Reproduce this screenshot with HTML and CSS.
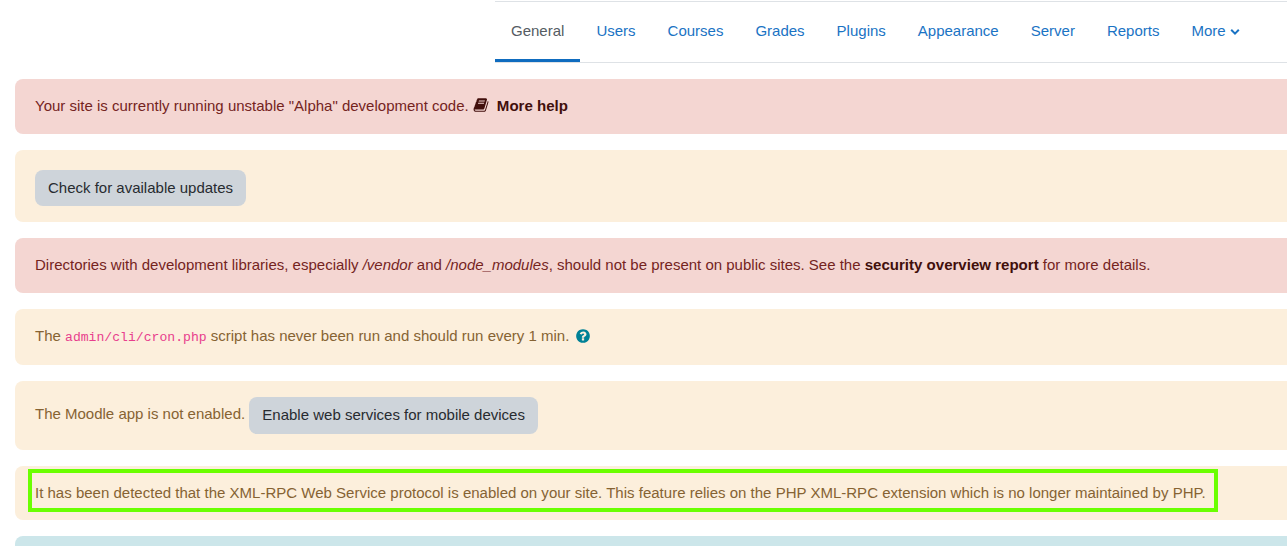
FILE: index.html
```html
<!DOCTYPE html>
<html lang="en">
<head>
<meta charset="utf-8">
<title>Site administration</title>
<link rel="stylesheet" href="styles.css">
</head>
<body>
<nav class="tabs">
  <a class="tab active" href="#">General</a>
  <a class="tab" href="#">Users</a>
  <a class="tab" href="#">Courses</a>
  <a class="tab" href="#">Grades</a>
  <a class="tab" href="#">Plugins</a>
  <a class="tab" href="#">Appearance</a>
  <a class="tab" href="#">Server</a>
  <a class="tab" href="#">Reports</a>
  <a class="tab" href="#">More <svg class="chev" viewBox="0 0 10 8" aria-hidden="true"><path d="M1.2 1.8 5 5.6l3.8-3.8" fill="none" stroke="currentColor" stroke-width="2"/></svg></a>
</nav>
<main class="alerts">
  <div class="alert danger">Your site is currently running unstable "Alpha" development code. <a class="alert-link" href="#"><svg class="ico book" viewBox="0 0 1792 1792" aria-hidden="true"><path fill="currentColor" d="M1703 478q40 57 18 129l-275 906q-19 64-76.5 107.5t-122.5 43.5h-923q-77 0-148.5-53.5t-99.5-131.5q-24-67-2-127 0-4 3-27t4-37q1-8-3-21.5t-3-19.5q2-11 8-21t16.5-23.5 16.5-23.5q23-38 45-91.5t30-91.5q3-10 .5-30t-.5-28q3-11 17-28t17-23q21-36 42-92t25-90q1-9-2.5-32t.5-28q4-13 22-30.5t22-22.5q19-26 42.5-84.5t27.5-96.5q1-8-3-25.5t-2-26.5q2-8 9-18t18-23 17-21q8-12 16.5-30.5t15-35 16-36 19.5-32 26.5-23.5 36-11.5 47.5 5.5l-1 3q38-9 51-9h761q74 0 114 56t18 130l-274 906q-36 119-71.5 153.5t-128.5 34.5h-869q-27 0-38 15-11 16-1 43 24 70 144 70h923q29 0 56-15.5t35-41.5l300-987q7-22 5-57 38 15 59 43zm-1064 2q-4 13 2 22.5t20 9.5h608q13 0 25.5-9.5t16.5-22.5l21-64q4-13-2-22.5t-20-9.5h-608q-13 0-25.5 9.5t-16.5 22.5zm-83 256q-4 13 2 22.5t20 9.5h608q13 0 25.5-9.5t16.5-22.5l21-64q4-13-2-22.5t-20-9.5h-608q-13 0-25.5 9.5t-16.5 22.5z"/></svg>More help</a></div>
  <div class="alert warning"><div class="btn-row"><a class="btn" href="#">Check for available updates</a></div></div>
  <div class="alert danger">Directories with development libraries, especially <em>/vendor</em> and <em>/node_modules</em>, should not be present on public sites. See the <a class="alert-link" href="#">security overview report</a> for more details.</div>
  <div class="alert warning">The <code>admin/cli/cron.php</code> script has never been run and should run every 1 min. <svg class="ico help" viewBox="0 0 1792 1792" aria-hidden="true"><path fill="currentColor" d="M1024 1376v-192q0-14-9-23t-23-9h-192q-14 0-23 9t-9 23v192q0 14 9 23t23 9h192q14 0 23-9t9-23zm256-672q0-88-55.5-163t-138.5-116-170-41q-243 0-371 213-15 24 8 42l132 100q7 6 19 6 16 0 25-12 53-68 86-92 34-24 86-24 48 0 85.5 26t37.5 59q0 38-20 61t-68 45q-63 28-115.5 86.5t-52.5 125.5v36q0 14 9 23t23 9h192q14 0 23-9t9-23q0-19 21.5-49.5t54.5-49.5q32-18 49-28.5t46-35 44.5-48 28-60.5 12.5-81zm384 192q0 209-103 385.5t-279.5 279.5-385.5 103-385.5-103-279.5-279.5-103-385.5 103-385.5 279.5-279.5 385.5-103 385.5 103 279.5 279.5 103 385.5z"/></svg></div>
  <div class="alert warning">The Moodle app is not enabled. <a class="btn btn-inline" href="#">Enable web services for mobile devices</a></div>
  <div class="alert warning highlighted">It has been detected that the XML-RPC Web Service protocol is enabled on your site. This feature relies on the PHP XML-RPC extension which is no longer maintained by PHP.<span class="marker"></span></div>
  <div class="alert info"></div>
</main>
</body>
</html>
```
FILE: styles.css
```css
* { box-sizing: border-box; }
html, body { margin: 0; height: 100%; overflow: hidden; background: #fff; }
body {
  padding-top: 1px;
  font-family: "Liberation Sans", Arial, sans-serif;
  font-size: 15px;
  line-height: 22.5px;
  color: #1d2125;
}
a { text-decoration: none; }

.tabs {
  display: flex;
  margin-left: 495px;
  border-top: 1px solid #dee2e6;
  border-bottom: 1px solid #dee2e6;
  height: 62px;
}
.tab {
  padding: 18px 16px 0;
  height: 60px;
  color: #1a73c4;
  border-bottom: 3px solid transparent;
  white-space: nowrap;
}
.tab.active { color: #555c63; border-bottom-color: #0f6cbf; }
.chev { width: 10px; height: 8px; vertical-align: 0; }

.alerts {
  display: flex;
  flex-direction: column;
  gap: 16px;
  width: 1500px;
  margin: 16px 0 0 15px;
}
.alert {
  position: relative;
  padding: 16px 20px;
  border-radius: 8px;
  white-space: nowrap;
}
.danger { background: #f4d6d2; color: #74241e; }
.warning { background: #fcefdc; color: #866333; }
.info { background: #cce6ea; min-height: 60px; }
.highlighted { font-size: 15.025px; }
.alert-link { font-weight: 700; font-size: 15.05px; color: #410f0c; }
.btn-row { padding-top: 4px; }
.btn {
  display: inline-block;
  padding: 7px 13px;
  border-radius: 8px;
  background: #ced4da;
  color: #272b30;
}
.btn-inline { vertical-align: -1px; }
code {
  font-family: "Liberation Mono", monospace;
  font-size: 13.125px;
  color: #e83e8c;
}
.ico { display: inline-block; width: 16px; height: 16px; vertical-align: -2px; }
.book { margin: 0 8px 0 0; }
.help { color: #008196; margin-left: 1px; vertical-align: -3px; }
.marker {
  position: absolute;
  left: 13px;
  top: 3px;
  width: 1190px;
  height: 43px;
  border: 4px solid #6bff00;
  pointer-events: none;
}
```
